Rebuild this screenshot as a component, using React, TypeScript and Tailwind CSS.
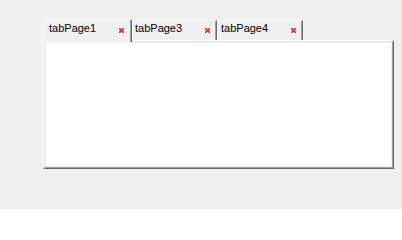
import React from 'react';

type Tab = { title: string; width: string; pad: string; mr: string };

const tabs: Tab[] = [
  { title: 'tabPage1', width: 'w-[89px]', pad: 'pl-[5px]', mr: 'mr-[7px]' },
  { title: 'tabPage3', width: 'w-[85px]', pad: 'pl-[2px]', mr: 'mr-[6px]' },
  { title: 'tabPage4', width: 'w-[86px]', pad: 'pl-[3px]', mr: 'mr-[6px]' },
];

function CloseX() {
  return (
    <svg width="5" height="5" viewBox="0 0 5 5" className="shrink-0">
      <path d="M0.5 0.5 L4.5 4.5 M4.5 0.5 L0.5 4.5" stroke="#ff1a1a" strokeWidth="1.6" strokeLinecap="square" />
    </svg>
  );
}

export default function App() {
  const selected = 0;

  return (
    <div className="h-[209px] w-[402px] bg-[#f0f0f0] pl-[43px] pt-[19px] font-['Liberation_Sans',Arial,sans-serif] text-[11px] leading-[13px] text-black">
      {/* Tab strip */}
      <div className="relative z-10 flex h-[21px] items-end">
        {tabs.map((t, i) => {
          const active = i === selected;
          return (
            <div
              key={t.title}
              className={`flex ${t.width} items-start border-t border-l border-r border-t-white border-l-white border-r-[#696969] bg-[#f0f0f0] shadow-[inset_-1px_0_0_#a0a0a0] ${t.pad} ${
                active ? 'h-[23px] -mb-[2px] pt-[2px]' : 'h-[20px] pt-[1px]'
              }`}
            >
              <span className="whitespace-nowrap">{t.title}</span>
              <span className={`ml-auto ${t.mr} ${active ? 'mt-[6px]' : 'mt-[6px]'}`}>
                <CloseX />
              </span>
            </div>
          );
        })}
      </div>

      {/* Page area */}
      <div className="h-[129px] w-[351px] border border-t-white border-l-white border-r-[#696969] border-b-[#696969]">
        <div className="h-full border border-t-[#e3e3e3] border-l-[#e3e3e3] border-r-[#a0a0a0] border-b-[#a0a0a0] bg-[#f0f0f0] p-px">
          <div className="h-full bg-white" />
        </div>
      </div>
    </div>
  );
}
